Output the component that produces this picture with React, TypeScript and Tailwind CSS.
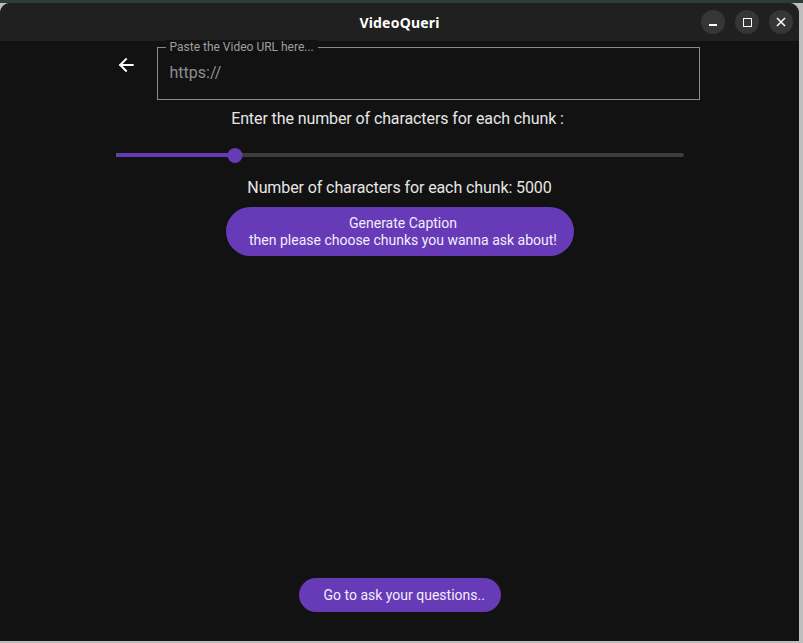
import { useState } from "react";

export default function App() {
  const [chunk] = useState(5000);
  // slider 0..25000 -> thumb at ~21%
  const pct = 21.1;

  return (
    <div className="w-[803px] h-[643px] bg-[#bdbdbd] overflow-hidden font-['Roboto',sans-serif]">
      {/* desktop strip above window */}
      <div className="h-[3px] w-full bg-[#2d3b39]" />
      <div className="w-[799px] h-[638px] flex flex-col rounded-t-[10px] overflow-hidden bg-[#121212]">
        {/* Title bar */}
        <div className="h-[38px] shrink-0 bg-[#202020] flex items-center relative">
          <div className="flex-1 text-center text-white text-[14px] font-bold font-['Noto_Sans',sans-serif] tracking-[0.2px]">
            VideoQueri
          </div>
          <div className="absolute right-[6px] top-[7px] flex gap-[10px]">
            <button className="w-6 h-6 rounded-full bg-[#363636] flex items-center justify-center">
              <span className="block w-[8px] h-[1.5px] bg-white mt-[6px]" />
            </button>
            <button className="w-6 h-6 rounded-full bg-[#363636] flex items-center justify-center">
              <span className="block w-[9px] h-[9px] border-[1.5px] border-white" />
            </button>
            <button className="w-6 h-6 rounded-full bg-[#363636] flex items-center justify-center">
              <svg width="10" height="10" viewBox="0 0 10 10">
                <path d="M1 1L9 9M9 1L1 9" stroke="white" strokeWidth="1.5" />
              </svg>
            </button>
          </div>
        </div>

        {/* Body */}
        <div className="flex-1 flex flex-col items-center">
          <div className="flex items-start w-[584px] ml-[16px] mt-[6px]">
            <button className="w-[41px] h-[36px] flex items-center text-white">
              <svg width="20" height="20" viewBox="0 0 24 24" fill="none">
                <path d="M20 12H5M12 5l-7 7 7 7" stroke="white" strokeWidth="2.4" strokeLinecap="square" />
              </svg>
            </button>
            <div className="relative flex-1 h-[53px] border border-[#8a8a8a] flex items-center pl-[12px]">
              <span className="absolute -top-[8px] left-[8px] px-[4px] bg-[#121212] text-[12px] leading-[14px] text-[#9e9e9e]">
                Paste the Video URL here...
              </span>
              <span className="text-[16px] text-[#8e8e8e] mt-[-2px]">https://</span>
            </div>
          </div>

          <div className="mt-[8px] text-[16px] leading-[22px] text-[#e6e6e6] -ml-[4px] tracking-[-0.1px]">
            Enter the number of characters for each chunk :
          </div>

          <div className="mt-[18px] w-[568px] h-[14px] relative flex items-center">
            <div className="w-full h-[4px] bg-[#3d3d3d] rounded-full" />
            <div className="absolute left-0 h-[4px] bg-[#673ab7]" style={{ width: `${pct}%` }} />
            <div
              className="absolute w-[15px] h-[15px] rounded-full bg-[#673ab7] -translate-x-1/2"
              style={{ left: `${pct}%` }}
            />
          </div>

          <div className="mt-[15px] text-[16px] leading-[22px] text-[#e6e6e6] tracking-[-0.1px]">
            Number of characters for each chunk: {chunk}
          </div>

          <button className="mt-[8px] w-[348px] h-[49px] rounded-full bg-[#673ab7] text-[#f3eefc] text-[14px] leading-[17px] pl-[7px] flex flex-col items-center justify-center">
            <span>Generate Caption</span>
            <span>then please choose chunks you wanna ask about!</span>
          </button>

          <div className="flex-1" />

          <button className="mb-[29px] h-[34px] w-[202px] rounded-full bg-[#673ab7] text-[#f3eefc] text-[14px] pl-[25px] pr-[10px] text-left whitespace-nowrap">
            Go to ask your questions..
          </button>
        </div>
      </div>
    </div>
  );
}
